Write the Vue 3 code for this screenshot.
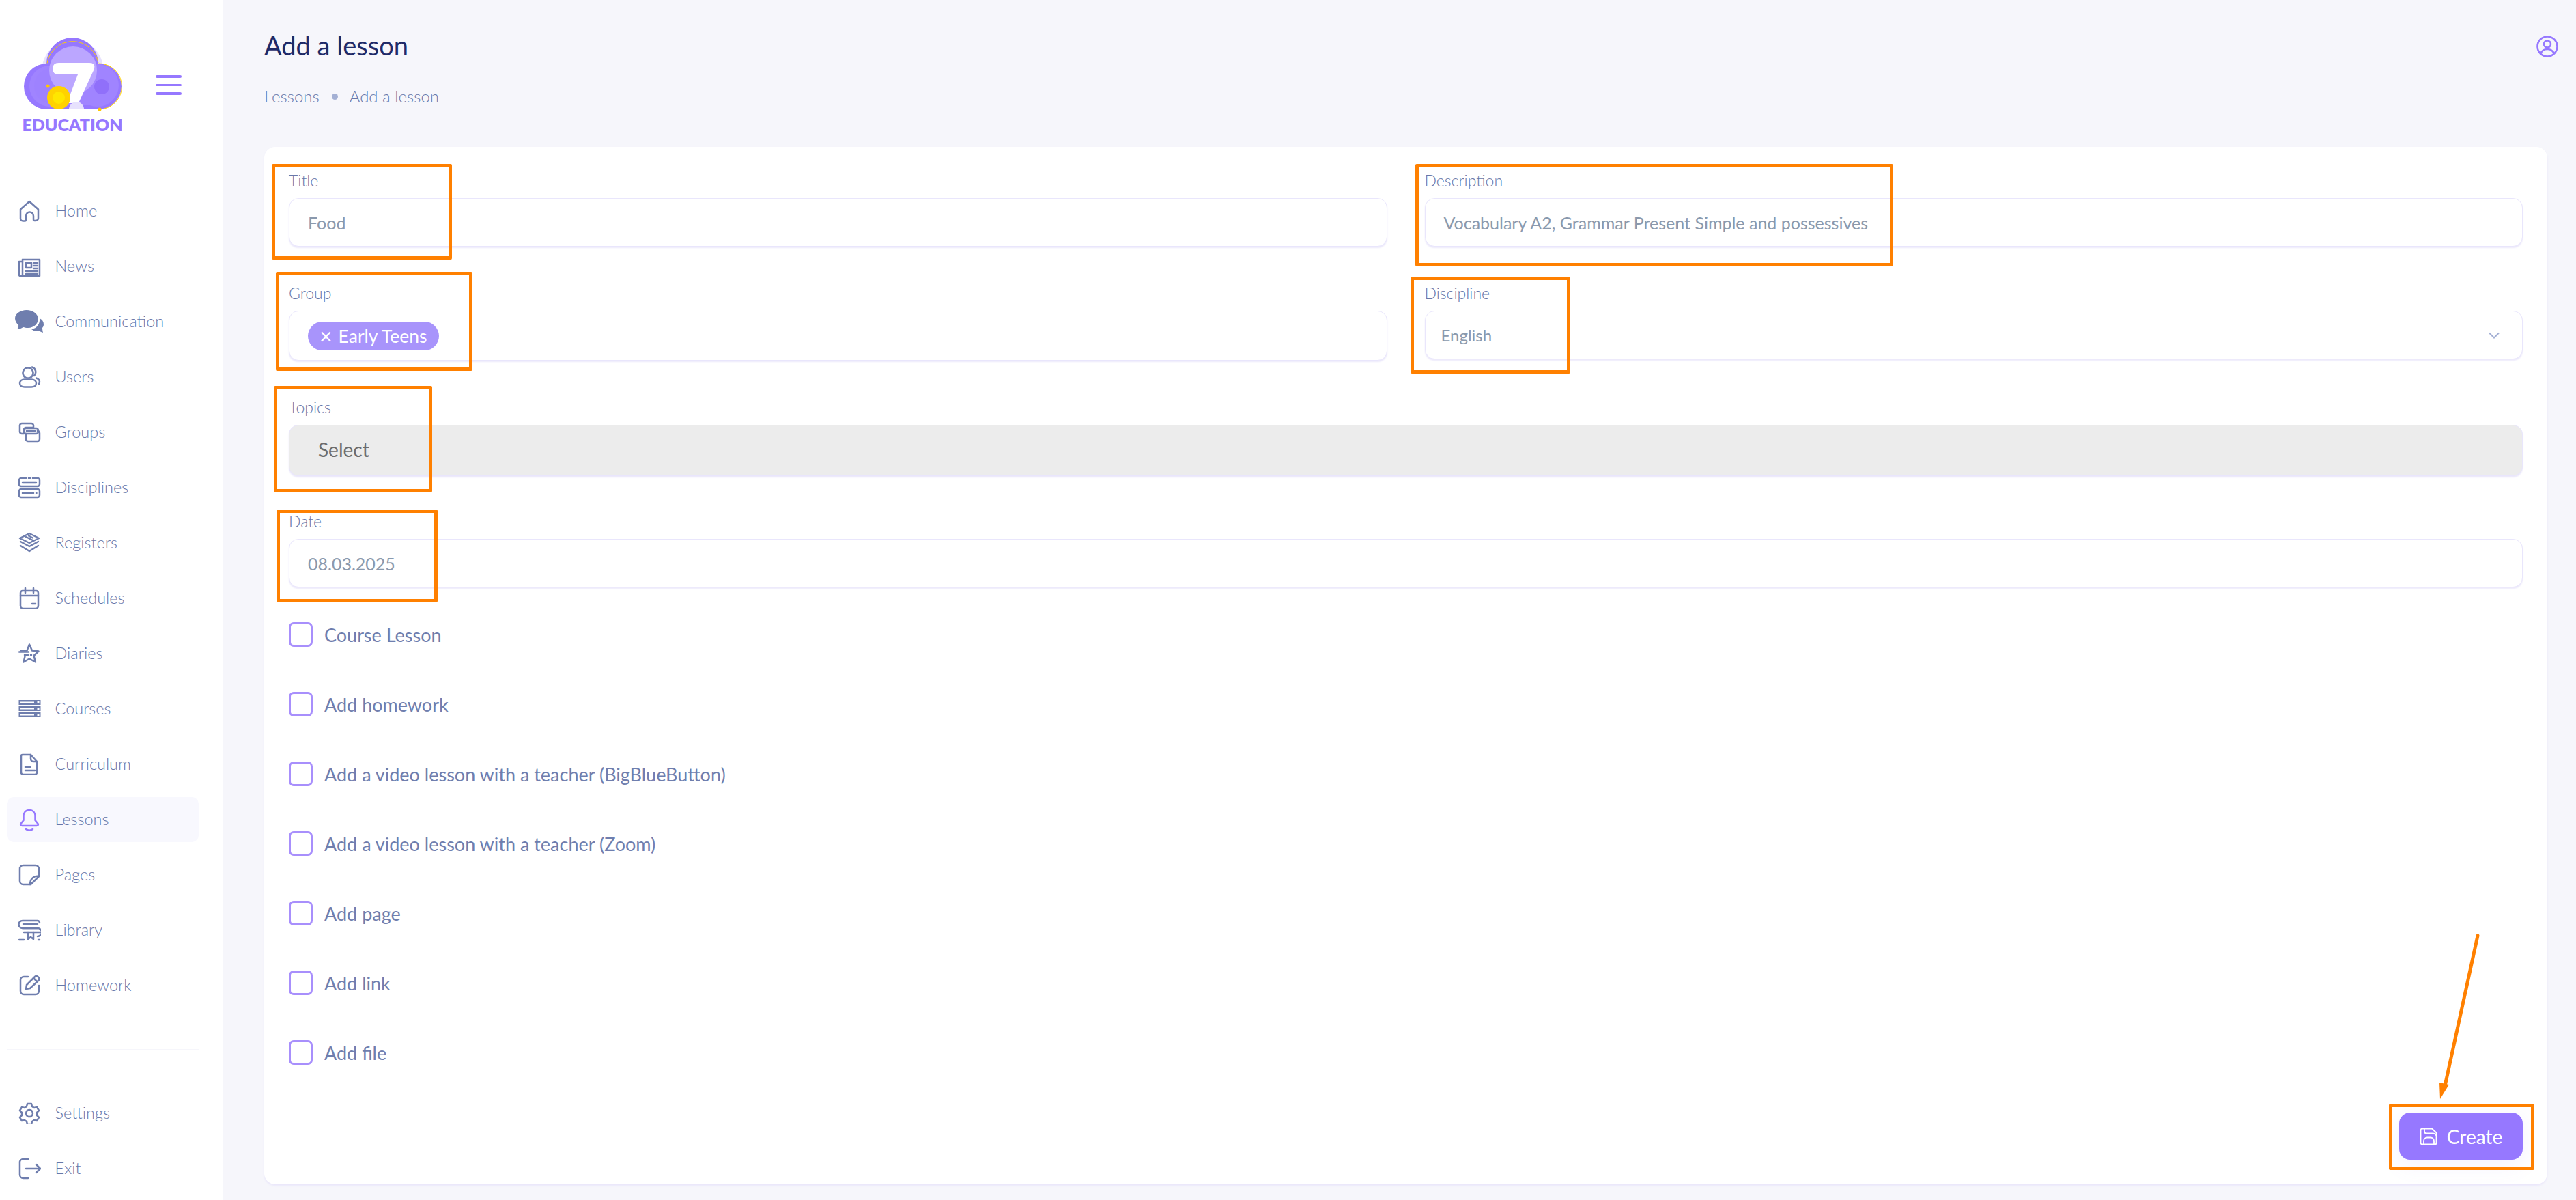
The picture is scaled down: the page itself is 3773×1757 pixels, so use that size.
<script setup>
const nav = [
  { label: 'Home', icon: 'home' },
  { label: 'News', icon: 'news' },
  { label: 'Communication', icon: 'chat' },
  { label: 'Users', icon: 'users' },
  { label: 'Groups', icon: 'groups' },
  { label: 'Disciplines', icon: 'disc' },
  { label: 'Registers', icon: 'layers' },
  { label: 'Schedules', icon: 'cal' },
  { label: 'Diaries', icon: 'star' },
  { label: 'Courses', icon: 'servers' },
  { label: 'Curriculum', icon: 'doc' },
  { label: 'Lessons', icon: 'bell', active: true },
  { label: 'Pages', icon: 'note' },
  { label: 'Library', icon: 'lib' },
  { label: 'Homework', icon: 'edit' }
]
const bottom = [
  { label: 'Settings', icon: 'gear' },
  { label: 'Exit', icon: 'exit' }
]
const checks = [
  'Course Lesson',
  'Add homework',
  'Add a video lesson with a teacher (BigBlueButton)',
  'Add a video lesson with a teacher (Zoom)',
  'Add page',
  'Add link',
  'Add file'
]
const paths = {
  home: ['M3 13.500 16 2l13 11.500v13a3.500 3.500 0 0 1-3.500 3.500h-2a1.500 1.500 0 0 1-1.500-1.500V23a5.500 5.500 0 0 0-11 0v6a1.500 1.500 0 0 1-1.500 1.500h-3A3.500 3.500 0 0 1 3 27z'],
  news: ['M6 6h25v24H3a2 2 0 0 1-2-2V9h5', 'M6 6v24', 'M11 11h8v7h-8z', 'M22 11h6M22 15h6M22 19h6M11 23h17M11 27h17'],
  users: ['M14 2.500a7.500 7.500 0 1 1-.01 0z', 'M20 1.500a7.500 7.500 0 0 1 3 12.500', 'M9 19.500h10c4 0 7 2.200 7 5.500s-3 5.500-7 5.500H9c-4 0-7-2.200-7-5.500s3-5.500 7-5.500z', 'M26 17.500c3 1 5 3 5 5.500 0 1-.3 2-1 3'],
  groups: ['M5 3h14a3 3 0 0 1 3 3v3H11a3 3 0 0 0-3 3v6H5a3 3 0 0 1-3-3V6a3 3 0 0 1 3-3z', 'M11 10h15a3 3 0 0 1 3 3v2a3 3 0 0 1-3 3H11a3 3 0 0 1-3-3v-2a3 3 0 0 1 3-3z', 'M12 14h13', 'M11 18v8a3 3 0 0 0 3 3h14a3 3 0 0 0 3-3v-9a3 3 0 0 0-3-3'],
  disc: ['M4 2h7M21 2h7a3 3 0 0 1 3 3v6a3 3 0 0 1-3 3H4a3 3 0 0 1-3-3V5a3 3 0 0 1 3-3', 'M15 2h2', 'M6 8h20', 'M4 18h24a3 3 0 0 1 3 3v6a3 3 0 0 1-3 3H4a3 3 0 0 1-3-3v-6a3 3 0 0 1 3-3z', 'M6 24h16M26 24h.5'],
  layers: ['M16 2 30 9 16 16 2 9z', 'M11 7l10 5M15 5.500l6 3', 'M3 14l13 7 13-7', 'M3 20l13 8 13-8'],
  cal: ['M6 5h20a3 3 0 0 1 3 3v19a4 4 0 0 1-4 4H7a4 4 0 0 1-4-4V8a3 3 0 0 1 3-3z', 'M10 1v7M22 1v7', 'M3 12h26', 'M20 24h5'],
  star: ['M4 11.500h8.500L16 2.500l4 9 9.500 1-7 6.500 2.500 9.500-9-5-8.500 5 2-8.500', 'M1 13.500h14M9 18h5M18 18h1'],
  doc: ['M6 2h12l9 10v16a3 3 0 0 1-3 3H7a3 3 0 0 1-3-3V4a2 2 0 0 1 2-2z', 'M18 2v6a4 4 0 0 0 4 4h5', 'M10 20h7M10 25h14'],
  bell: ['M16 2c5.500 0 8.500 4 8.500 9v6l4 5c1 1.500 0 3-2 3H5.500c-2 0-3-1.500-2-3l4-5v-6C7.500 6 10.500 2 16 2z', 'M11 30c3 2 7 2 10 0'],
  note: ['M7 2h18a5 5 0 0 1 5 5v11L18 30H7a5 5 0 0 1-5-5V7a5 5 0 0 1 5-5z', 'M30 18c-8-1-13 4-13 12'],
  lib: ['M6 2h22a3 3 0 0 1 3 3M28 13H6a5.500 5.500 0 0 1 0-11', 'M7 7h21', 'M6 13h22a5 5 0 0 1 0 12', 'M8 19h24', 'M1 30h7M14 19v10l4-3 4 3V19M29 30h2'],
  edit: ['M14 3H8a5 5 0 0 0-5 5v16a5 5 0 0 0 5 5h17a5 5 0 0 0 5-5v-8', 'M11 21l1-6L24 3c1.500-1.500 3-1.500 5 .5s2 3.500.5 5L17 20z', 'M22 5l5 5'],
  gear: ['M13 2h6l1 4 3 2 4-1 3 5-3 3v4l3 3-3 5-4-1-3 2-1 4h-6l-1-4-3-2-4 1-3-5 3-3v-4L2 12l3-5 4 1 3-2z', 'M16 11a5 5 0 1 1-.01 0z'],
  exit: ['M14 2H7a5 5 0 0 0-5 5v18a5 5 0 0 0 5 5h7', 'M11 16h21', 'M26 10l6 6-6 6']
}
</script>

<template>
  <div class="page">
    <aside class="sidebar">
      <div class="brand">
        <div class="logo">
          <svg class="cloud" viewBox="0 0 146 104" width="146" height="104">
            <circle cx="73.500" cy="44" r="45" fill="#e7e1fd" />
            <path d="M35.500 34a33.500 33.500 0 0 0 0 67h76a33.500 33.500 0 0 0 0-67h-.5a38 38 0 0 0-76 0z" fill="#9678ff" />
            <circle cx="110" cy="66" r="31" fill="#a084ff" />
            <circle cx="40" cy="67" r="30" fill="#a084ff" />
            <circle cx="43" cy="67" r="26" fill="#9e82ff" />
            <path d="M60 60h50v35H60z" fill="#a084ff" />
            <circle cx="74" cy="44" r="35" fill="#bba6ff" />
            <circle cx="116" cy="68" r="11" fill="#9070fa" />
            <path d="M36 33.500a38 38 0 0 1 75 0" fill="none" stroke="#ffd200" stroke-width="1" />
            <path d="M112 34a33.500 33.500 0 0 1 0 67" fill="none" stroke="#ffd200" stroke-width="1" />
            <path d="M53 33H98Q107 33 105 42L82 92H65L81 50H53Q44 50 44 41.500 44 33 53 33z" fill="#fff" />
            <path d="M68 101a11 11 0 0 1 22 0z" fill="#e7e1fd" />
            <circle cx="53" cy="84" r="17" fill="#ffd200" />
            <circle cx="53" cy="84" r="9" fill="#ffe600" />
            <circle cx="37" cy="67" r="2.500" fill="#ffc800" />
            <circle cx="113" cy="101" r="2.500" fill="#ffc800" />
          </svg>
          <span class="edu">EDUCATION</span>
        </div>
        <div class="burger"><i></i><i></i><i></i></div>
      </div>

      <nav class="nav">
        <a v-for="it in nav" :key="it.label" class="item" :class="{ active: it.active }">
          <svg v-if="it.icon === 'chat'" class="ic chat" viewBox="0 0 42 34" width="42" height="34">
            <path d="M17 0c9 0 16 5 17 12 .5 7-6 14-15 14-3 0-5-.5-7-1-3 2-6 3-9 3 1.500-2 2.500-4 2-6C2 19 0 16 0 12 0 5 8 0 17 0z" fill="#6f7eae" />
            <path d="M36 12c4 2 6 5 6 9 0 2-1 4-2 5 0 2 .5 5 1 7-3-1-5-2-7-3-3 1-7 .5-10-2 8-1 13-8 12-16z" fill="#6f7eae" />
          </svg>
          <svg v-else-if="it.icon === 'servers'" class="ic" viewBox="0 0 33 32" width="33" height="32">
            <g v-for="y in [3, 12, 21]" :key="y">
              <rect x="0.500" :y="y" width="32" height="7" fill="#6f7eae" />
              <rect x="3" :y="y + 2.500" width="20" height="2" fill="#fff" />
              <rect x="27.500" :y="y + 2" width="3" height="3" fill="#fff" />
            </g>
          </svg>
          <svg v-else class="ic" :class="{ wide: it.icon === 'news' || it.icon === 'disc' }" viewBox="0 0 33 32" width="33" height="32" fill="none" stroke="currentColor" stroke-width="2.500" stroke-linecap="round" stroke-linejoin="round">
            <path v-for="(d, i) in paths[it.icon]" :key="i" :d="d" />
          </svg>
          <span>{{ it.label }}</span>
        </a>
      </nav>

      <hr class="divider" />

      <nav class="nav">
        <a v-for="it in bottom" :key="it.label" class="item">
          <svg class="ic" viewBox="0 0 33 32" width="33" height="32" fill="none" stroke="currentColor" stroke-width="2.500" stroke-linecap="round" stroke-linejoin="round">
            <path v-for="(d, i) in paths[it.icon]" :key="i" :d="d" />
          </svg>
          <span>{{ it.label }}</span>
        </a>
      </nav>
    </aside>

    <main class="main">
      <header class="head">
        <div>
          <h1>Add a lesson</h1>
          <div class="crumbs"><span>Lessons</span><i></i><span>Add a lesson</span></div>
        </div>
        <svg class="profile" viewBox="0 0 32 32" width="32" height="32" fill="none" stroke="#9678ff" stroke-width="2.600">
          <circle cx="16" cy="16" r="14.500" />
          <circle cx="16" cy="12.500" r="5" />
          <path d="M6.500 26c1.500-4 5-6 9.500-6s8 2 9.500 6" />
        </svg>
      </header>

      <section class="card">
        <div class="row">
          <label class="field"><span class="lab">Title</span><div class="input">Food</div></label>
          <label class="field"><span class="lab">Description</span><div class="input">Vocabulary A2, Grammar Present Simple and possessives</div></label>
        </div>
        <div class="row">
          <label class="field"><span class="lab">Group</span><div class="input tall"><span class="chip"><b>×</b>Early Teens</span></div></label>
          <label class="field"><span class="lab">Discipline</span>
            <div class="input sel">English
              <svg viewBox="0 0 16 10" width="16" height="10" fill="none" stroke="#a4b0d4" stroke-width="2"><path d="M1 1.500l7 7 7-7" /></svg>
            </div>
          </label>
        </div>
        <label class="field topics"><span class="lab">Topics</span><div class="input gray"><span>Select</span></div></label>
        <label class="field"><span class="lab">Date</span><div class="input">08.03.2025</div></label>

        <div class="checks">
          <label v-for="c in checks" :key="c" class="check"><i></i><span>{{ c }}</span></label>
        </div>

        <div class="actions">
          <button class="create">
            <svg viewBox="0 0 26 26" width="26" height="26" fill="none" stroke="#fff" stroke-width="1.800" stroke-linejoin="round">
              <path d="M3 1.500h15l6.500 6v15a2 2 0 0 1-2 2h-19a2 2 0 0 1-2-2v-19a2 2 0 0 1 2-2z" />
              <path d="M7 1.500v4a3 3 0 0 0 3 3h8c3 0 6.500 1 6.500 4" />
              <path d="M6 24.500v-5a5 5 0 0 1 5-5h5a5 5 0 0 1 5 5v5" />
            </svg>
            Create
          </button>
        </div>
      </section>
    </main>

    <div class="mark" style="left:398px;top:240px;width:264px;height:140px"></div>
    <div class="mark" style="left:404px;top:398px;width:288px;height:145px"></div>
    <div class="mark" style="left:401px;top:565px;width:232px;height:156px"></div>
    <div class="mark" style="left:405px;top:746px;width:236px;height:136px"></div>
    <div class="mark" style="left:2073px;top:240px;width:700px;height:150px"></div>
    <div class="mark" style="left:2066px;top:405px;width:234px;height:142px"></div>
    <div class="mark" style="left:3499px;top:1616px;width:213px;height:97px"></div>
    <svg class="arrow" viewBox="0 0 3773 1757" width="3773" height="1757">
      <path d="M3629 1370 3581 1590" stroke="#ff8000" stroke-width="5" stroke-linecap="round" fill="none" />
      <path d="M3573 1585 3587 1588 3574 1609z" fill="#ff8000" />
    </svg>
  </div>
</template>

<style>
html, body { margin: 0; background: #f6f6fb; }
</style>

<style scoped>
.page {
  position: relative;
  display: grid;
  grid-template-columns: 327px 1fr;
  width: 3773px;
  height: 1757px;
  overflow: hidden;
  background: #f6f6fb;
  font-family: Lato, "Noto Sans", sans-serif;
  color: #6f7eae;
}
.sidebar { background: #fff; padding: 0 36px 0 10px; }
.brand { display: flex; align-items: flex-start; height: 276px; padding: 0 0 0 23px; }
.logo { display: flex; flex-direction: column; align-items: center; width: 146px; margin-top: 59px; }
.cloud { display: block; overflow: visible; }
.edu { font-size: 25px; font-weight: 800; line-height: 26px; color: #9678ff; margin-top: 6px; }
.burger { display: flex; flex-direction: column; gap: 9px; margin: 110px 0 0 49px; }
.burger i { display: block; width: 38px; height: 3.500px; border-radius: 2px; background: #9678ff; }
.nav { display: flex; flex-direction: column; gap: 15px; }
.item {
  display: flex;
  align-items: center;
  height: 66px;
  border-radius: 10px;
  font-size: 23.500px;
  font-weight: 300;
  color: #6878aa;
}
.item span { margin-bottom: 3px; }
.item .ic { width: 33px; height: 32px; margin-left: 17px; margin-right: 20.500px; flex: none; color: #6f7eae; }
.item .ic.wide { width: 37px; height: 32px; margin-left: 15px; margin-right: 18.500px; }
.item .ic.chat { width: 42px; height: 34px; margin-left: 12px; margin-right: 16.500px; }
.item.active { background: #f8f8fe; }
.item.active .ic { color: #9678ff; }
.divider { height: 2px; margin: 60px 0 59px; border: 0; background: #f6f6fb; }

.main { padding: 0 42px 0 60px; min-width: 0; }
.head { display: flex; justify-content: space-between; align-items: flex-start; height: 215px; }
h1 { margin: 43px 0 0; font-size: 38px; line-height: 46px; font-weight: 400; color: #1f2a68; }
.crumbs { display: flex; align-items: center; margin-top: 37px; font-size: 24px; line-height: 30px; font-weight: 300; color: #6878aa; }
.crumbs i { width: 9px; height: 9px; border-radius: 50%; background: #a4b0d4; margin: 0 17px 0 18px; }
.profile { margin: 52px -16px 0 0; }
.card {
  height: 1519px;
  box-sizing: border-box;
  padding: 36px;
  background: #fff;
  border-radius: 16px;
  box-shadow: 0 2px 3px #e9e6fa;
  display: flex;
  flex-direction: column;
}
.row { display: grid; grid-template-columns: 1fr 1fr; column-gap: 55px; margin-bottom: 55px; align-items: start; }
.field { display: block; }
.topics { margin: 0 0 53px; }
.lab { display: block; height: 26px; line-height: 26px; margin-bottom: 13px; font-size: 23px; font-weight: 300; color: #6878aa; }
.input {
  box-sizing: border-box;
  display: flex;
  align-items: center;
  height: 71px;
  padding: 0 27px;
  border: 1px solid #e9e6fc;
  border-radius: 14px;
  box-shadow: 0 2px 2px #ece9fb;
  background: #fff;
  font-size: 25px;
  font-weight: 400;
  color: #8a99ad;
}
.tall { height: 73px; }
.sel { justify-content: space-between; padding: 0 33px 0 23px; font-size: 24px; }
.gray { height: 75px; background: #ececec; padding-left: 42px; font-size: 28px; color: #6c6c6c; }
.gray span { margin-bottom: 3px; }
.chip { display: inline-flex; align-items: center; height: 42px; padding: 0 18px 0 17px; border-radius: 21px; background: #a894fb; color: #fff; font-size: 26.500px; }
.chip b { font-weight: 400; font-size: 32px; line-height: 32px; margin-right: 9px; }
.checks { display: flex; flex-direction: column; gap: 66px; margin-top: 51px; }
.check { display: flex; align-items: center; height: 36px; font-size: 27px; color: #6f7eae; }
.check i { box-sizing: border-box; width: 35px; height: 36px; border: 3px solid #a88ffc; border-radius: 7px; margin-right: 17px; flex: none; }
.actions { display: flex; justify-content: flex-end; margin-top: auto; }
.create {
  display: flex;
  align-items: center;
  justify-content: center;
  gap: 14px;
  width: 181px;
  height: 69px;
  border: 0;
  border-radius: 16px;
  background: #9678ff;
  color: #fff;
  font-family: inherit;
  font-size: 28px;
  font-weight: 400;
  box-shadow: 0 8px 30px rgba(150, 120, 255, .1);
}
.mark { position: absolute; box-sizing: border-box; border: 5px solid #ff8000; border-radius: 2px; pointer-events: none; }
.arrow { position: absolute; left: 0; top: 0; pointer-events: none; }
</style>
